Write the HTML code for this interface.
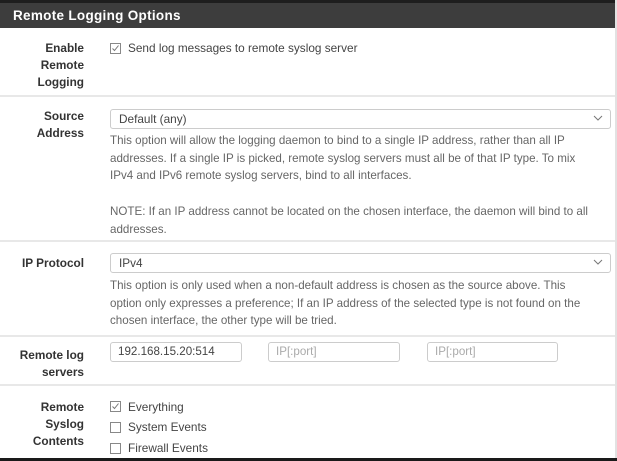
<!DOCTYPE html>
<html><head><meta charset="utf-8"><style>
*{margin:0;padding:0;box-sizing:border-box}
body{width:617px;height:461px;overflow:hidden;background:#fff;font-family:"Liberation Sans",Arial,sans-serif;font-size:12px;color:#333;position:relative}
.a{position:absolute;white-space:nowrap}
.hdr{left:0;top:0;width:615px;height:28px;background:#3d3d3d;border-top:3px solid #1e1e1e;color:#fff;font-weight:bold;font-size:13.5px;padding:5px 0 0 13px;letter-spacing:0.3px}
.sep{left:0;width:615px;height:2px;background:#e8e8e8}
.lbl{right:533px;font-weight:bold;text-align:right;line-height:17px;font-size:11.8px;color:#333}
.d{left:110px;color:#666;font-size:11.6px;line-height:17.7px}
.sel{left:110px;width:501px;height:20px;border:1px solid #ccc;border-radius:3px;padding:2px 0 0 8px;color:#444;font-size:11.8px}
.sel svg{position:absolute;right:7px;top:5px}
.inp{height:20px;border:1px solid #ccc;border-radius:3px;padding:2px 0 0 7px;font-size:11.6px;color:#444}
.cb{width:11px;height:11px;border:1px solid #888;background:#fff}
.ct{left:128px;font-size:11.8px;color:#444}
</style></head><body>
<div class="a hdr">Remote Logging Options</div>
<div class="a" style="left:615px;top:0;width:2px;height:461px;background:#e2e2e2"></div>

<div class="a lbl" style="top:40px">Enable<br>Remote<br>Logging</div>
<div class="a cb" style="left:110px;top:43px"><svg width="9" height="9" viewBox="0 0 9 9" style="position:absolute;left:0;top:0"><path d="M1.5 4.5l2 2 4-5" fill="none" stroke="#777" stroke-width="1"/></svg></div>
<div class="a ct" style="top:41px">Send log messages to remote syslog server</div>
<div class="a sep" style="top:95px"></div>

<div class="a lbl" style="top:108px">Source<br>Address</div>
<div class="a sel" style="top:109px">Default (any)<svg width="10" height="6" viewBox="0 0 10 6"><path d="M1 1l4 4 4-4" fill="none" stroke="#777" stroke-width="1"/></svg></div>
<div class="a d" style="top:132px">This option will allow the logging daemon to bind to a single IP address, rather than all IP<br>addresses. If a single IP is picked, remote syslog servers must all be of that IP type. To mix<br>IPv4 and IPv6 remote syslog servers, bind to all interfaces.<br><br>NOTE: If an IP address cannot be located on the chosen interface, the daemon will bind to all<br>addresses.</div>
<div class="a sep" style="top:240px"></div>

<div class="a lbl" style="top:255px">IP Protocol</div>
<div class="a sel" style="top:253px">IPv4<svg width="10" height="6" viewBox="0 0 10 6"><path d="M1 1l4 4 4-4" fill="none" stroke="#777" stroke-width="1"/></svg></div>
<div class="a d" style="top:277px">This option is only used when a non-default address is chosen as the source above. This<br>option only expresses a preference; If an IP address of the selected type is not found on the<br>chosen interface, the other type will be tried.</div>
<div class="a sep" style="top:335px"></div>

<div class="a lbl" style="top:347px">Remote log<br>servers</div>
<div class="a inp" style="left:110px;top:342px;width:132px">192.168.15.20:514</div>
<div class="a inp" style="left:268px;top:342px;width:132px;color:#aaa">IP[:port]</div>
<div class="a inp" style="left:427px;top:342px;width:131px;color:#aaa">IP[:port]</div>
<div class="a sep" style="top:384px"></div>

<div class="a lbl" style="top:399px">Remote<br>Syslog<br>Contents</div>
<div class="a cb" style="left:110px;top:401px"><svg width="9" height="9" viewBox="0 0 9 9" style="position:absolute;left:0;top:0"><path d="M1.5 4.5l2 2 4-5" fill="none" stroke="#777" stroke-width="1"/></svg></div>
<div class="a ct" style="top:400px">Everything</div>
<div class="a cb" style="left:110px;top:422px"></div>
<div class="a ct" style="top:420px">System Events</div>
<div class="a cb" style="left:110px;top:443px"></div>
<div class="a ct" style="top:441px">Firewall Events</div>
<div class="a" style="left:0;top:458px;width:617px;height:3px;background:#1a1a1a"></div>
</body></html>
